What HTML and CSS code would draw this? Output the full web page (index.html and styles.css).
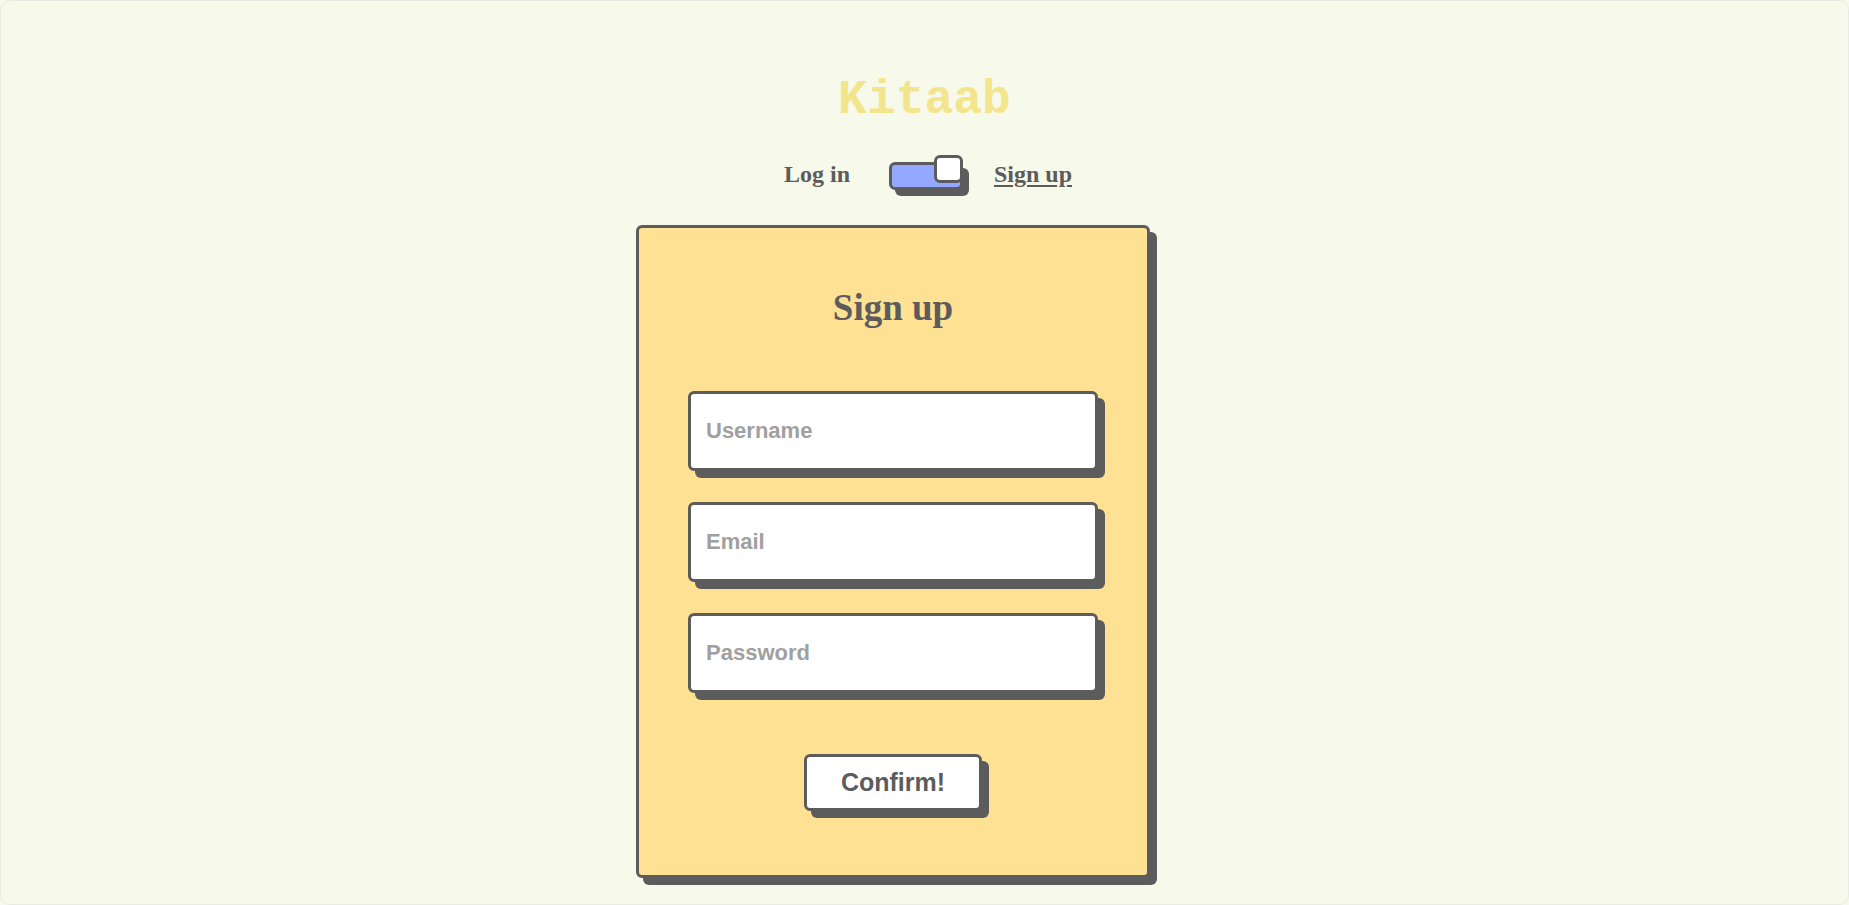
FILE: index.html
```html
<!DOCTYPE html>
<html lang="en">
<head>
<meta charset="utf-8">
<title>Kitaab</title>
<link rel="stylesheet" href="styles.css">
</head>
<body>
<div class="page">
  <h1 class="brand">Kitaab</h1>
  <div class="switch-row">
    <span class="switch-label">Log in</span>
    <span class="switch">
      <span class="switch-knob"></span>
    </span>
    <a class="switch-label switch-active" href="#">Sign up</a>
  </div>
  <form class="card">
    <h2 class="card-title">Sign up</h2>
    <div class="fields">
      <input class="field" type="text" placeholder="Username">
      <input class="field" type="email" placeholder="Email">
      <input class="field" type="password" placeholder="Password">
    </div>
    <button class="confirm" type="button">Confirm!</button>
  </form>
</div>
</body>
</html>
```

FILE: styles.css
```css
html, body {
  margin: 0;
  padding: 0;
  height: 100%;
}

body {
  background: #f7f9eb;
  font-family: "Liberation Serif", "Times New Roman", serif;
  color: #5c5c5c;
}

.page {
  box-sizing: border-box;
  height: 905px;
  border: 1px solid #e9ebe3;
  border-radius: 10px;
  display: flex;
  flex-direction: column;
  align-items: center;
  overflow: hidden;
}

.brand {
  margin: 71px 0 0;
  font-family: "Liberation Mono", "Courier New", monospace;
  font-weight: bold;
  font-size: 48px;
  line-height: 56px;
  color: #f3e58c;
}

.switch-row {
  margin-top: 34px;
  display: flex;
  align-items: center;
  margin-left: 7px;
}

.switch-label {
  font-weight: bold;
  font-size: 24px;
  line-height: 24px;
  margin-bottom: 4px;
  color: #5c5c5c;
}

.switch-active {
  text-decoration: underline;
  text-underline-offset: 3px;
  text-decoration-thickness: 2px;
}

.switch {
  position: relative;
  box-sizing: border-box;
  width: 74px;
  height: 28px;
  margin: 0 31px 0 39px;
  background: #94a8ff;
  border: 3px solid #5c5c5c;
  border-radius: 6px;
  box-shadow: 6px 6px 0 #5c5c5c;
}

.switch-knob {
  position: absolute;
  box-sizing: border-box;
  top: -10px;
  right: -3px;
  width: 29px;
  height: 28px;
  background: #ffffff;
  border: 3px solid #5c5c5c;
  border-radius: 6px;
}

.card {
  box-sizing: border-box;
  width: 514px;
  height: 653px;
  margin-top: 35px;
  margin-right: 63px;
  background: #ffe194;
  border: 3px solid #5c5c5c;
  border-radius: 6px;
  box-shadow: 7px 7px 0 #5c5c5c;
  display: flex;
  flex-direction: column;
  align-items: center;
}

.card-title {
  margin: 60px 0 0;
  font-size: 37px;
  line-height: 40px;
  font-weight: bold;
  color: #5c5c5c;
}

.fields {
  margin-top: 63px;
  display: flex;
  flex-direction: column;
  gap: 31px;
}

.field {
  box-sizing: border-box;
  width: 410px;
  height: 80px;
  padding: 0 15px;
  background: #ffffff;
  border: 3px solid #5c5c5c;
  border-radius: 6px;
  box-shadow: 7px 7px 0 #5c5c5c;
  font-family: "Liberation Sans", Arial, sans-serif;
  font-weight: bold;
  font-size: 22px;
  color: #5c5c5c;
  outline: none;
}

.field::placeholder {
  color: #a0a0a0;
  opacity: 1;
}

.confirm {
  box-sizing: border-box;
  margin-top: 61px;
  width: 178px;
  height: 57px;
  background: #ffffff;
  border: 3px solid #5c5c5c;
  border-radius: 6px;
  box-shadow: 7px 7px 0 #5c5c5c;
  font-family: "Liberation Sans", Arial, sans-serif;
  font-weight: bold;
  font-size: 25px;
  color: #5c5c5c;
  padding: 0;
  cursor: pointer;
}
```
